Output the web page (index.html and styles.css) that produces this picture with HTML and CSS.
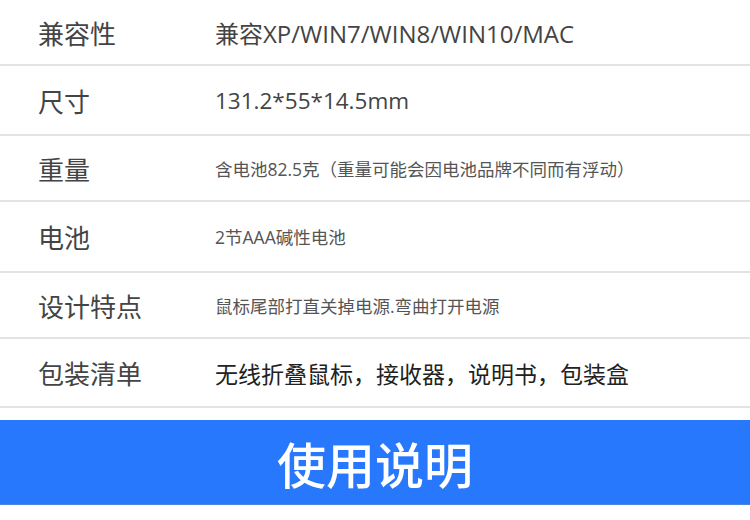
FILE: index.html
```html
<!DOCTYPE html>
<html lang="zh-CN">
<head>
    <meta charset="UTF-8">
    <meta name="viewport" content="width=device-width, initial-scale=1.0">
    <title>产品参数</title>
    <link rel="stylesheet" href="styles.css">
</head>
<body>
    <div class="spec-table">
        <div class="spec-row row-a">
            <div class="spec-label">兼容性</div>
            <div class="spec-value large">兼容XP/WIN7/WIN8/WIN10/MAC</div>
        </div>
        <div class="spec-row row-b">
            <div class="spec-label">尺寸</div>
            <div class="spec-value medium">131.2*55*14.5mm</div>
        </div>
        <div class="spec-row row-a">
            <div class="spec-label">重量</div>
            <div class="spec-value small">含电池82.5克（重量可能会因电池品牌不同而有浮动）</div>
        </div>
        <div class="spec-row row-c">
            <div class="spec-label">电池</div>
            <div class="spec-value small">2节AAA碱性电池</div>
        </div>
        <div class="spec-row row-a">
            <div class="spec-label">设计特点</div>
            <div class="spec-value small">鼠标尾部打直关掉电源.弯曲打开电源</div>
        </div>
        <div class="spec-row row-d">
            <div class="spec-label">包装清单</div>
            <div class="spec-value large dark">无线折叠鼠标，接收器，说明书，包装盒</div>
        </div>
    </div>

    <div class="section-title">使用说明</div>
</body>
</html>
```

FILE: styles.css
```css
body {
    font-family: 'Open Sans', 'Noto Sans CJK SC', sans-serif;
    background-color: #fff;
    color: #444;
    margin: 0;
    padding: 0;
    width: 750px;
}
.spec-table {
    display: flex;
    flex-direction: column;
}
.spec-row {
    display: flex;
    align-items: center;
    padding-top: 3px;
    border-bottom: 2px solid #e3e3e3;
    box-sizing: border-box;
}
.row-a {
    height: 66px;
}
.row-b {
    height: 70px;
}
.row-c {
    height: 71px;
}
.row-d {
    height: 69px;
}
.spec-label {
    width: 177px;
    padding-left: 38px;
    font-size: 26px;
    line-height: 1;
    color: #444;
}
.spec-value {
    line-height: 1;
    color: #444;
}
.spec-value.large {
    font-size: 24px;
}
.spec-value.medium {
    font-size: 22.5px;
}
.spec-value.small {
    font-size: 17.5px;
    color: #555;
}
.spec-value.dark {
    font-size: 23px;
    color: #222;
}
.section-title {
    margin-top: 12px;
    height: 85px;
    background-color: #2878fe;
    border-bottom: 1px solid #4a86d8;
    box-sizing: border-box;
    display: flex;
    align-items: center;
    justify-content: center;
    color: #fff;
    font-family: 'Noto Sans CJK SC', sans-serif;
    font-size: 49px;
    font-weight: 500;
}
```
